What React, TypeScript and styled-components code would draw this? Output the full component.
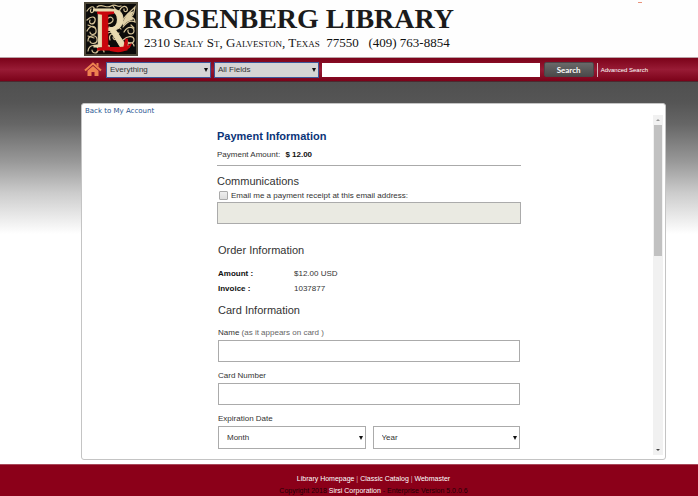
import React from "react";
import styled, { createGlobalStyle } from "styled-components";

const sans = `"Liberation Sans", Arial, sans-serif`;

const GlobalStyle = createGlobalStyle`
  *, *::before, *::after { box-sizing: border-box; }
  html, body, #root { height: 100%; }
  body { margin: 0; background: #fff; font-family: ${sans}; font-size: 8px; color: #333; overflow: hidden; }
  input, select, button { font: inherit; color: inherit; margin: 0; border-radius: 0; }
  a { text-decoration: none; }
  h1, h2, p, dl, dd { margin: 0; }
`;

const Page = styled.div`
  min-height: 100%;
  display: flex;
  flex-direction: column;
`;

const Header = styled.header`
  display: flex;
  align-items: flex-start;
  gap: 5px;
  height: 57px;
  padding: 2px 56px 0 84px;
  background: #fefefe;
`;

const Emblem = styled.svg`
  flex: none;
  width: 54px;
  height: 54px;
  overflow: visible;
`;

const LibraryName = styled.h1`
  font: bold 28px/34px "Liberation Serif", serif;
  color: #1b1b1b;
  white-space: nowrap;
`;

const Address = styled.p`
  padding-left: 1px;
  font: 13px/14px "Liberation Serif", serif;
  font-variant-caps: small-caps;
  color: #111;
  white-space: pre;
`;

const HeaderMark = styled.span`
  width: 4px;
  height: 1px;
  margin-left: auto;
  background: #e9937c;
`;

const SearchBar = styled.form`
  display: flex;
  align-items: center;
  height: 25px;
  padding: 0 50px 0 84px;
  border-top: 1px solid #b9a3a7;
  border-bottom: 1px solid #4b2a30;
  background: linear-gradient(#7b0219, #981b35 50%, #7b0219);
`;

const HomeLink = styled.a`
  flex: none;
  width: 22px;
  height: 15px;
  display: flex;
`;

const SelectWrap = styled.span<{ $grow?: boolean }>`
  position: relative;
  display: block;
  flex: ${(p) => (p.$grow ? "1" : "none")};
  margin-right: ${(p) => (p.$grow ? "0" : "3px")};
  &::after {
    content: "";
    position: absolute;
    right: 3px;
    top: 50%;
    margin-top: -2px;
    border: solid transparent;
    border-width: 4px 2px 0;
    border-top-color: #111;
    pointer-events: none;
  }
`;

const SearchSelect = styled.select`
  display: block;
  appearance: none;
  width: 105px;
  height: 16px;
  padding: 0 3px;
  border: 1px solid #3c5a9c;
  background: #d5d5d5;
  color: #333;
`;

const SearchInput = styled.input`
  flex: 1;
  min-width: 0;
  height: 14px;
  padding: 0 4px;
  border: 0;
  background: #fff;
`;

const SearchButton = styled.button`
  width: 50px;
  height: 15px;
  margin: 0 3px 0 4px;
  padding: 0;
  border: 1px solid #4c4548;
  border-radius: 2px;
  background: linear-gradient(#696969, #4b4b4b);
  color: #fff;
  font: bold 8px/12px Lato, sans-serif;
`;

const AdvancedLink = styled.a`
  padding-left: 3px;
  border-left: 1px solid #d9b5bc;
  color: #fff;
  font-size: 6px;
  line-height: 14px;
  white-space: nowrap;
`;

const Main = styled.main`
  flex: 1;
  padding: 21px 32px 4px 81px;
  background: linear-gradient(#505050, #555 20px, #666 42px, #999 80px, #ccc 111px, #fff 152px);
`;

const Panel = styled.section`
  display: grid;
  grid-template-columns: 1fr 10px;
  min-height: 357px;
  padding: 0 2px 0 3px;
  border: 1px solid #c4c4c4;
  border-radius: 3px;
  background: #fff;
`;

const BackLink = styled.a`
  display: block;
  font: 7px/15px "DejaVu Sans", sans-serif;
  color: #1f5490;
`;

const PaymentForm = styled.form`
  max-width: 436px;
  padding: 9px 0 0 132px;
`;

const PaymentTitle = styled.h2`
  font-size: 11px;
  line-height: 16px;
  color: #0b3478;
`;

const AmountLine = styled.p`
  padding: 5px 0 4px;
  line-height: 12px;
  border-bottom: 1px solid #aaa;
  strong { margin-left: 3px; color: #111; }
`;

const SectionTitle = styled.h2<{ $gap: number }>`
  margin-top: ${(p) => p.$gap}px;
  font-size: 11px;
  font-weight: 400;
  line-height: 14px;
  color: #333;
`;

const ReceiptRow = styled.div`
  display: flex;
  align-items: center;
  gap: 3px;
  height: 14px;
  padding-left: 2px;
`;

const Checkbox = styled.input`
  appearance: none;
  width: 9px;
  height: 9px;
  border: 1px solid #aaa;
  border-radius: 1px;
  background: linear-gradient(#eee, #ddd);
`;

const TextField = styled.input`
  display: block;
  width: 100%;
  height: 22px;
  padding: 0 8px;
  border: 1px solid #ababab;
  background: #fff;
  &:disabled { background: #eaeae2; }
`;

const CardFields = styled.div`
  padding: 0 1px;
`;

const OrderList = styled.dl`
  display: grid;
  grid-template-columns: 76px 1fr;
  margin-top: 9px;
  line-height: 15px;
  dt { font-weight: 700; color: #111; }
`;

const Label = styled.label<{ $gap: number }>`
  display: block;
  margin-top: ${(p) => p.$gap}px;
  margin-bottom: 1px;
  line-height: 12px;
  span { color: #666; }
`;

const DateRow = styled.div`
  display: flex;
  gap: 7px;
`;

const DateSelect = styled.select`
  display: block;
  appearance: none;
  width: 100%;
  height: 23px;
  padding: 0 8px;
  border: 1px solid #ababab;
  background: #fff;
`;

const ScrollTrack = styled.div`
  display: flex;
  flex-direction: column;
  align-items: center;
  margin: 11px 0 4px;
  background: #f1f1f1;
`;

const ScrollArrow = styled.span<{ $down?: boolean }>`
  width: 4px;
  height: 2px;
  margin: 4px 0;
  background: ${(p) => (p.$down ? "#444" : "#999")};
  clip-path: ${(p) => (p.$down ? "polygon(0 0, 100% 0, 50% 100%)" : "polygon(50% 0, 100% 100%, 0 100%)")};
`;

const ScrollThumb = styled.div`
  width: 8px;
  height: 131px;
  margin-bottom: auto;
  background: #c1c1c1;
`;

const Footer = styled.footer`
  height: 32px;
  padding: 8px 0 0 49px;
  border-top: 1px solid #a8485a;
  background: #8b0019;
  color: #220006;
  font-size: 7px;
  line-height: 12px;
  text-align: center;
  a { color: #fff; }
`;

const FooterNav = styled.nav`
  color: #d8a0aa;
`;

const vines = [
  "M3 9C7 3 11 4 10 8S5 11 7 7M3 18c5-5 9-3 8 1s-7 4-5-1",
  "M3 29c3-6 8-6 9-1s-6 6-6 2M4 39c0-6 8-7 9-2s-7 6-7 2",
  "M4 49c1-7 9-7 10-2s-6 5-6 1M12 51c4-6 8-4 8-1",
  "M13 5c5-4 9 2 14-1s6 2 10 0M36 12c-2-6 5-10 7-6s-4 5-3 1",
  "M37 22c1-6 8-11 14-17-1 6-1 10-8 11 5-2 8 0 8 4-5-3-9 1-12 5",
  "M40 30c4-7 10-5 10-1s-7 4-6-1M39 38c5-5 11-4 11 0s-7 4-7 0",
  "M23 17c4-4 8 0 5 3s-7 1-5-1M25 25c5 3 9-2 12 2M26 38c-2-6 4-8 6-4s-3 5-3 1",
  "M24 31c4-3 7 3 11 0M4 23l7 3M4 34l6 2M42 44c3-5 8-3 8 0M47 23l3 3M29 4l3 4",
];

function LibraryEmblem() {
  return (
    <Emblem viewBox="0 0 54 54" role="img" aria-label="Rosenberg Library emblem">
      <rect width="54" height="54" fill="#4c4637" />
      <rect x="2" y="2" width="50" height="50" fill="#0c0b09" />
      <g fill="none" stroke="#d5c398" strokeWidth="1.2" strokeLinecap="round">
        {vines.map((d) => (
          <path key={d} d={d} />
        ))}
      </g>
      <path d="M38 21l6-10 6-2-3 6 3 2-7 3-4 4z" fill="#dfcfa5" />
      <g fontFamily="Liberation Serif, serif">
        <text x="8" y="45" fontSize="56" fill="#e9dab0" stroke="#e9dab0" strokeWidth="1">R</text>
        <text x="12" y="48" fontSize="57" fill="#c9060c" stroke="#c9060c" strokeWidth="1">L</text>
      </g>
      <path d="M24 44c4 4 13 5 24-3-2 8-11 11-22 8z" fill="#c9060c" />
    </Emblem>
  );
}

export default function App() {
  return (
    <Page>
      <GlobalStyle />
      <Header>
        <LibraryEmblem />
        <div>
          <LibraryName>ROSENBERG LIBRARY</LibraryName>
          <Address>{"2310 Sealy St, Galveston, Texas  77550   (409) 763-8854"}</Address>
        </div>
        <HeaderMark aria-hidden="true" />
      </Header>
      <SearchBar onSubmit={(e) => e.preventDefault()}>
        <HomeLink href="#home" aria-label="Home">
          <svg width="18" height="15" viewBox="0 0 18 15" aria-hidden="true">
            <path d="M1 8.5L9 1.5l8 7" fill="none" stroke="#ee8250" strokeWidth="2" />
            <path d="M3.5 8.8L9 4l5.5 4.8V14h-4v-4h-3v4h-4zM12.500 1h2v4l-2-1.700z" fill="#ee8250" />
          </svg>
        </HomeLink>
        <SelectWrap>
          <SearchSelect aria-label="Search limit">
            <option>Everything</option>
          </SearchSelect>
        </SelectWrap>
        <SelectWrap>
          <SearchSelect aria-label="Search field">
            <option>All Fields</option>
          </SearchSelect>
        </SelectWrap>
        <SearchInput type="text" aria-label="Search terms" />
        <SearchButton type="submit">Search</SearchButton>
        <AdvancedLink href="#advanced">Advanced Search</AdvancedLink>
      </SearchBar>
      <Main>
        <Panel>
          <div>
            <BackLink href="#account">Back to My Account</BackLink>
            <PaymentForm onSubmit={(e) => e.preventDefault()}>
              <PaymentTitle>Payment Information</PaymentTitle>
              <AmountLine>
                Payment Amount: <strong>$ 12.00</strong>
              </AmountLine>
              <SectionTitle $gap={8}>Communications</SectionTitle>
              <ReceiptRow>
                <Checkbox type="checkbox" id="receipt" />
                <label htmlFor="receipt">Email me a payment receipt at this email address:</label>
              </ReceiptRow>
              <TextField type="email" aria-label="Email address" disabled />
              <CardFields>
                <SectionTitle $gap={19}>Order Information</SectionTitle>
                <OrderList>
                  <dt>Amount :</dt>
                  <dd>$12.00 USD</dd>
                  <dt>Invoice :</dt>
                  <dd>1037877</dd>
                </OrderList>
                <SectionTitle $gap={7}>Card Information</SectionTitle>
                <Label htmlFor="name" $gap={10}>
                  Name <span>(as it appears on card )</span>
                </Label>
                <TextField type="text" id="name" />
                <Label htmlFor="number" $gap={8}>Card Number</Label>
                <TextField type="text" id="number" />
                <Label htmlFor="month" $gap={8}>Expiration Date</Label>
                <DateRow>
                  <SelectWrap $grow>
                    <DateSelect id="month">
                      <option>Month</option>
                    </DateSelect>
                  </SelectWrap>
                  <SelectWrap $grow>
                    <DateSelect aria-label="Expiration year">
                      <option>Year</option>
                    </DateSelect>
                  </SelectWrap>
                </DateRow>
              </CardFields>
            </PaymentForm>
          </div>
          <ScrollTrack aria-hidden="true">
            <ScrollArrow />
            <ScrollThumb />
            <ScrollArrow $down />
          </ScrollTrack>
        </Panel>
      </Main>
      <Footer>
        <FooterNav>
          <a href="#library">Library Homepage</a> | <a href="#classic">Classic Catalog</a> |{" "}
          <a href="#webmaster">Webmaster</a>
        </FooterNav>
        <p>
          Copyright 2018 <a href="#sirsi">Sirsi Corporation</a> - Enterprise Version 5.0.0.6
        </p>
      </Footer>
    </Page>
  );
}
